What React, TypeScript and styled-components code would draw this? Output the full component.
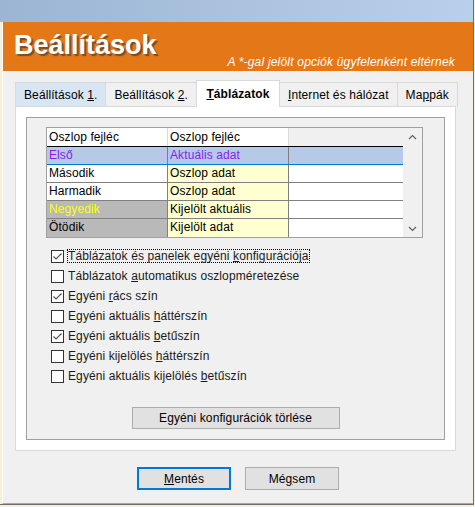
import React from 'react';
import styled, { createGlobalStyle, css } from 'styled-components';

const GlobalStyle = createGlobalStyle`
  html, body {
    margin: 0;
    padding: 0;
    background: #f4f0dc;
  }
  body {
    font-family: "Liberation Sans", Arial, sans-serif;
    font-size: 12px;
    letter-spacing: 0.1px;
    color: #000;
  }
`;

const Window = styled.div`
  border-bottom: 1px solid #6e6e6e;
  border-right: 1px solid #6e6e6e;
  box-sizing: border-box;
  display: flex;
  flex-direction: column;
  height: 505px;
  width: 474px;
`;

const TitleStrip = styled.div`
  background: linear-gradient(90deg, #9cb5d2 0%, #b8d0eb 100%);
  flex: none;
  height: 22px;
`;

const Frame = styled.div`
  background: #f0f0f0;
  border-bottom: 1px solid #a8a8a8;
  border-left: 1px solid #fff;
  display: flex;
  flex: 1;
  flex-direction: column;
  margin-left: 2px;
`;

const Banner = styled.div`
  background: #e47717;
  box-sizing: border-box;
  display: flex;
  flex: none;
  height: 49px;
  justify-content: space-between;
  padding: 8px 18px 0 11px;
`;

const Title = styled.div`
  color: #fff;
  font-size: 27px;
  font-weight: bold;
  letter-spacing: 0;
  line-height: 31px;
  text-shadow: 2px 2px 1px rgba(70, 60, 50, 0.7);
`;

const Subtitle = styled.div`
  align-self: flex-end;
  color: #fff;
  font-size: 12px;
  font-style: italic;
  letter-spacing: 0.2px;
  line-height: 14px;
  margin-bottom: 2px;
`;

const Tabs = styled.div`
  align-items: flex-end;
  display: flex;
  height: 27px;
  margin: 9px 0 0 12px;
`;

const Tab = styled.div<{ $active?: boolean; $hover?: boolean }>`
  align-items: center;
  background: ${(p) => (p.$hover ? '#d8e6f4' : '#f0f0f0')};
  border: 1px solid #d9d9d9;
  border-bottom: none;
  box-sizing: border-box;
  display: flex;
  height: 25px;
  margin-left: -1px;
  padding: 0 8px;
  white-space: nowrap;

  &:first-child {
    margin-left: 0;
  }

  ${(p) => p.$active && css`
    background: #fff;
    font-weight: bold;
    height: 27px;
    padding: 0 9.5px;
    position: relative;
    z-index: 1;
  `}
`;

const Key = styled.span`
  text-decoration: underline;
`;

const Panel = styled.div`
  background: #fff;
  border: 1px solid #d9d9d9;
  box-sizing: border-box;
  height: 345px;
  margin: -1px 0 0 12px;
  padding: 10px;
  width: 441px;
`;

const GroupBox = styled.div`
  background: #f0f0f0;
  border: 1px solid #a0a0a0;
  box-sizing: border-box;
  display: flex;
  flex-direction: column;
  height: 100%;
  padding: 9px 19px 0 19px;
`;

const Grid = styled.div`
  background: #fff;
  border: 1px solid #a0a0a0;
  display: flex;
  width: 375px;
`;

const Rows = styled.div`
  display: flex;
  flex-direction: column;
  width: 356px;
`;

const HeaderRow = styled.div`
  border-bottom: 1px solid #000;
  box-sizing: border-box;
  display: grid;
  grid-template-columns: 121px 121px 114px;
  height: 19px;
`;

const HeaderCell = styled.div<{ $blank?: boolean }>`
  background: ${(p) => (p.$blank ? '#f0f0f0' : '#fff')};
  border-right: 1px solid #dadada;
  line-height: 18px;
  padding-left: 2px;

  &:last-child {
    border-right: none;
  }
`;

const DataRow = styled.div<{ $focus?: boolean }>`
  border-bottom: 1px solid #808080;
  box-sizing: border-box;
  display: grid;
  grid-template-columns: 121px 121px 114px;
  height: 18px;

  &:last-child {
    border-bottom: none;
  }

  ${(p) => p.$focus && css`
    border-bottom-color: #0078d7;
    box-shadow: inset 1px 0 #0078d7, inset -1px 0 #0078d7;
  `}
`;

const Cell = styled.div<{ $bg: string; $fg: string }>`
  background: ${(p) => p.$bg};
  border-right: 1px solid #808080;
  color: ${(p) => p.$fg};
  line-height: 17px;
  overflow: hidden;
  padding-left: 2px;
  white-space: nowrap;

  &:last-child {
    border-right: none;
  }
`;

const ScrollBar = styled.div`
  align-items: center;
  background: #f0f0f0;
  display: flex;
  flex-direction: column;
  justify-content: space-between;
  padding: 6px 0 5px;
  width: 19px;
`;

const CheckList = styled.div`
  display: flex;
  flex-direction: column;
  margin: 8px 0 0 5px;
`;

const CheckRow = styled.div`
  align-items: center;
  display: flex;
  gap: 4px;
  height: 20px;
`;

const Box = styled.span`
  align-items: center;
  background: #fff;
  border: 1px solid #333;
  box-sizing: border-box;
  display: flex;
  height: 13px;
  justify-content: center;
  width: 13px;
`;

const Label = styled.span<{ $focus?: boolean }>`
  border: 1px dotted transparent;
  color: #1a1a1a;
  line-height: 12px;
  padding: 0 1px 0 0;
  margin-left: -1px;

  ${(p) => p.$focus && css`
    border-color: #000;
  `}
`;

const Button = styled.button<{ $default?: boolean }>`
  background: #e1e1e1;
  border: 1px solid #adadad;
  border-radius: 0;
  box-sizing: border-box;
  color: #000;
  font-family: "Liberation Sans", Arial, sans-serif;
  font-size: 12px;
  height: 23px;
  letter-spacing: 0.1px;
  padding: 0;
  width: 94px;

  ${(p) => p.$default && css`
    border: 2px solid #0078d7;
  `}
`;

const ResetButton = styled(Button)`
  align-self: center;
  height: 22px;
  margin-top: 21px;
  width: 208px;
`;

const ButtonRow = styled.div`
  display: flex;
  gap: 14px;
  justify-content: center;
  margin-top: 16px;
`;

type RowKind = 'current' | 'normal' | 'selCurrent' | 'sel';

const rows: { name: string; data: string; kind: RowKind }[] = [
  { name: 'Első', data: 'Aktuális adat', kind: 'current' },
  { name: 'Második', data: 'Oszlop adat', kind: 'normal' },
  { name: 'Harmadik', data: 'Oszlop adat', kind: 'normal' },
  { name: 'Negyedik', data: 'Kijelölt aktuális', kind: 'selCurrent' },
  { name: 'Ötödik', data: 'Kijelölt adat', kind: 'sel' },
];

const CURRENT_BG = '#b6cae8';
const PURPLE = '#8a1cf0';
const YELLOW_BG = '#ffffd0';
const SEL_BG = '#b9b9b9';

const cellColors = (kind: RowKind) => {
  switch (kind) {
    case 'current':
      return [
        { bg: CURRENT_BG, fg: PURPLE },
        { bg: CURRENT_BG, fg: PURPLE },
        { bg: CURRENT_BG, fg: '#000' },
      ];
    case 'selCurrent':
      return [
        { bg: SEL_BG, fg: '#ffff00' },
        { bg: YELLOW_BG, fg: '#000' },
        { bg: '#fff', fg: '#000' },
      ];
    case 'sel':
      return [
        { bg: SEL_BG, fg: '#000' },
        { bg: YELLOW_BG, fg: '#000' },
        { bg: '#fff', fg: '#000' },
      ];
    default:
      return [
        { bg: '#fff', fg: '#000' },
        { bg: YELLOW_BG, fg: '#000' },
        { bg: '#fff', fg: '#000' },
      ];
  }
};

const options = [
  { pre: 'Táblázatok és panelek egyéni ', key: 'k', post: 'onfigurációja', checked: true },
  { pre: 'Táblázatok ', key: 'a', post: 'utomatikus oszlopméretezése', checked: false },
  { pre: 'Egyéni ', key: 'r', post: 'ács szín', checked: true },
  { pre: 'Egyéni aktuális ', key: 'h', post: 'áttérszín', checked: false },
  { pre: 'Egyéni aktuális ', key: 'b', post: 'etűszín', checked: true },
  { pre: 'Egyéni kijelölés ', key: 'h', post: 'áttérszín', checked: false },
  { pre: 'Egyéni aktuális kijelölés ', key: 'b', post: 'etűszín', checked: false },
];

const Chevron: React.FC<{ up?: boolean }> = ({ up }) => (
  <svg width="9" height="6" viewBox="0 0 9 6">
    <polyline
      points={up ? '1,5 4.5,1.5 8,5' : '1,1 4.5,4.5 8,1'}
      fill="none"
      stroke="#606060"
      strokeWidth="1.2"
    />
  </svg>
);

const CheckMark = () => (
  <svg width="11" height="11" viewBox="0 0 11 11">
    <polyline points="1.5,5.5 4,8 9.5,2.5" fill="none" stroke="#555" strokeWidth="1.2" />
  </svg>
);

const App: React.FC = () => (
  <>
    <GlobalStyle />
    <Window>
      <TitleStrip />
      <Frame>
        <Banner>
          <Title>Beállítások</Title>
          <Subtitle>A *-gal jelölt opciók ügyfelenként eltérnek</Subtitle>
        </Banner>

        <Tabs>
          <Tab $hover>Beállítások&nbsp;<Key>1</Key>.</Tab>
          <Tab>Beállítások&nbsp;<Key>2</Key>.</Tab>
          <Tab $active><Key>T</Key>áblázatok</Tab>
          <Tab><Key>I</Key>nternet és hálózat</Tab>
          <Tab>Ma<Key>p</Key>pák</Tab>
        </Tabs>

        <Panel>
          <GroupBox>
            <Grid>
              <Rows>
                <HeaderRow>
                  <HeaderCell>Oszlop fejléc</HeaderCell>
                  <HeaderCell>Oszlop fejléc</HeaderCell>
                  <HeaderCell $blank />
                </HeaderRow>
                {rows.map((row) => {
                  const colors = cellColors(row.kind);
                  return (
                    <DataRow key={row.name} $focus={row.kind === 'current'}>
                      <Cell $bg={colors[0].bg} $fg={colors[0].fg}>{row.name}</Cell>
                      <Cell $bg={colors[1].bg} $fg={colors[1].fg}>{row.data}</Cell>
                      <Cell $bg={colors[2].bg} $fg={colors[2].fg} />
                    </DataRow>
                  );
                })}
              </Rows>
              <ScrollBar>
                <Chevron up />
                <Chevron />
              </ScrollBar>
            </Grid>

            <CheckList>
              {options.map((opt, i) => (
                <CheckRow key={i}>
                  <Box>{opt.checked && <CheckMark />}</Box>
                  <Label $focus={i === 0}>
                    {opt.pre}<Key>{opt.key}</Key>{opt.post}
                  </Label>
                </CheckRow>
              ))}
            </CheckList>

            <ResetButton>Egyéni konfigurációk törlése</ResetButton>
          </GroupBox>
        </Panel>

        <ButtonRow>
          <Button $default><Key>M</Key>entés</Button>
          <Button>Mé<Key>g</Key>sem</Button>
        </ButtonRow>
      </Frame>
    </Window>
  </>
);

export default App;
